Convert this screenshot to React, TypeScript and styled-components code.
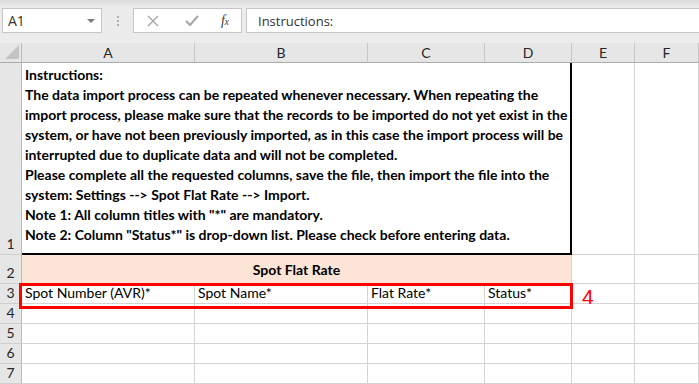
import { Fragment } from "react";
import styled, { createGlobalStyle } from "styled-components";

const GlobalStyle = createGlobalStyle`
  html, body {
    margin: 0;
    padding: 0;
    background: #ffffff;
  }
  * {
    box-sizing: border-box;
  }
`;

const GRID = "#d4d4d4";
const HEAD_BG = "#e6e6e6";

export const Page = styled.div`
  width: 699px;
  height: 384px;
  overflow: hidden;
  position: relative;
  background: #ffffff;
  font-family: "Lato", "Liberation Sans", sans-serif;
`;

export const Toolbar = styled.div`
  height: 43px;
  display: flex;
  align-items: flex-start;
  padding: 8px 0 0 2px;
  background: linear-gradient(#dcdcdc 0px, #ececec 7px, #ececec 100%);
`;

export const NameBox = styled.div`
  width: 100px;
  height: 25px;
  background: #ffffff;
  border: 1px solid #c6c6c6;
  display: flex;
  align-items: center;
  justify-content: space-between;
  padding: 0 6px 0 5px;
  font-family: "Open Sans", sans-serif;
  font-size: 14px;
  color: #333333;
`;

export const DropArrow = styled.span`
  width: 0;
  height: 0;
  border-left: 4px solid transparent;
  border-right: 4px solid transparent;
  border-top: 4px solid #7a7a7a;
`;

export const Dots = styled.div`
  width: 31px;
  height: 25px;
  display: flex;
  flex-direction: column;
  align-items: center;
  justify-content: center;
  gap: 2px;
  span {
    width: 2px;
    height: 2px;
    background: #b0b0b0;
  }
`;

export const ButtonBox = styled.div`
  width: 109px;
  height: 25px;
  background: #ffffff;
  border: 1px solid #c6c6c6;
  display: flex;
  align-items: center;
  padding-left: 13px;
`;

export const IconSlot = styled.div<{ $w: number }>`
  width: ${(p) => p.$w}px;
  display: flex;
  align-items: center;
`;

export const FxText = styled.span`
  font-family: "Liberation Serif", serif;
  font-style: italic;
  font-size: 14px;
  color: #444444;
  letter-spacing: -0.5px;
  sub {
    font-size: 10px;
    vertical-align: baseline;
  }
`;

export const FormulaInput = styled.div`
  flex: 1;
  height: 25px;
  margin-left: 4px;
  background: #ffffff;
  border: 1px solid #c6c6c6;
  border-right: none;
  display: flex;
  align-items: center;
  padding-left: 11px;
  font-family: "Open Sans", sans-serif;
  font-size: 13px;
  color: #333333;
`;

export const Sheet = styled.div`
  display: grid;
  grid-template-columns: 22px 173px 173px 117px 87px 63px 64px;
  grid-template-rows: 20px 192px 29px 20px 20px 20px 20px 20px;
  position: relative;
`;

export const Corner = styled.div`
  background: ${HEAD_BG};
  border-right: 1px solid #bcbcbc;
  border-bottom: 1px solid #ababab;
  position: relative;
  &::after {
    content: "";
    position: absolute;
    right: 2px;
    bottom: 3px;
    width: 0;
    height: 0;
    border-left: 14px solid transparent;
    border-bottom: 14px solid #c4c4c4;
  }
`;

export const ColHead = styled.div`
  background: ${HEAD_BG};
  border-right: 1px solid #c6c6c6;
  border-bottom: 1px solid #ababab;
  display: flex;
  align-items: center;
  justify-content: center;
  font-size: 14px;
  color: #262626;
`;

export const RowHead = styled.div`
  background: ${HEAD_BG};
  border-right: 1px solid #bcbcbc;
  border-bottom: 1px solid #cfcfcf;
  display: flex;
  align-items: flex-end;
  justify-content: center;
  padding-bottom: 1px;
  font-size: 14px;
  color: #262626;
  line-height: 18px;
`;

export const Cell = styled.div`
  border-right: 1px solid ${GRID};
  border-bottom: 1px solid ${GRID};
  display: flex;
  align-items: flex-end;
  padding: 0 0 1px 3px;
  font-size: 14px;
  line-height: 18px;
  color: #000000;
  white-space: nowrap;
`;

export const NoteCell = styled.div`
  grid-column: span 4;
  border-right: 2px solid #000000;
  border-bottom: 2px solid #000000;
  padding: 2px 0 0 3px;
  font-size: 14px;
  font-weight: 700;
  line-height: 20px;
  color: #000000;
  white-space: nowrap;
`;

export const TitleCell = styled.div`
  grid-column: span 4;
  background: #fce4d6;
  border-right: 1px solid ${GRID};
  display: flex;
  align-items: flex-end;
  justify-content: center;
  padding-bottom: 5px;
  font-size: 14px;
  font-weight: 700;
  line-height: 18px;
  color: #000000;
`;

export const Marker = styled.div`
  position: absolute;
  left: 19px;
  top: 240px;
  width: 554px;
  height: 26px;
  border: 3px solid #ff0000;
  pointer-events: none;
`;

export const MarkerLabel = styled.div`
  position: absolute;
  left: 582px;
  top: 242px;
  font-family: "Liberation Sans", sans-serif;
  font-size: 21px;
  color: #ff0000;
`;

const columns = ["A", "B", "C", "D", "E", "F"];

const noteLines = [
  "Instructions:",
  "The data import process can be repeated whenever necessary. When repeating the",
  "import process, please make sure that the records to be imported do not yet exist in the",
  "system, or have not been previously imported, as in this case the import process will be",
  "interrupted due to duplicate data and will not be completed.",
  "Please complete all the requested columns, save the file, then import the file into the",
  "system: Settings --> Spot Flat Rate --> Import.",
  'Note 1: All column titles with "*" are mandatory.',
  'Note 2: Column "Status*" is drop-down list. Please check before entering data.',
];

const headers = ["Spot Number (AVR)*", "Spot Name*", "Flat Rate*", "Status*"];

function CrossIcon() {
  return (
    <svg width="12" height="12" viewBox="0 0 12 12">
      <path d="M1 1 L11 11 M11 1 L1 11" stroke="#a6a6a6" strokeWidth="1.4" fill="none" />
    </svg>
  );
}

function CheckIcon() {
  return (
    <svg width="14" height="12" viewBox="0 0 14 12">
      <path d="M1 6 L5 10 L13 1" stroke="#a6a6a6" strokeWidth="2" fill="none" />
    </svg>
  );
}

export default function App() {
  return (
    <>
      <GlobalStyle />
      <Page>
        <Toolbar>
          <NameBox>
            A1
            <DropArrow />
          </NameBox>
          <Dots>
            <span />
            <span />
            <span />
          </Dots>
          <ButtonBox>
            <IconSlot $w={38}>
              <CrossIcon />
            </IconSlot>
            <IconSlot $w={36}>
              <CheckIcon />
            </IconSlot>
            <IconSlot $w={18}>
              <FxText>
                f<sub>x</sub>
              </FxText>
            </IconSlot>
          </ButtonBox>
          <FormulaInput>Instructions:</FormulaInput>
        </Toolbar>

        <Sheet>
          <Corner />
          {columns.map((c) => (
            <ColHead key={c}>{c}</ColHead>
          ))}

          <RowHead>1</RowHead>
          <NoteCell>
            {noteLines.map((line) => (
              <div key={line}>{line}</div>
            ))}
          </NoteCell>
          <Cell />
          <Cell />

          <RowHead>2</RowHead>
          <TitleCell>Spot Flat Rate</TitleCell>
          <Cell />
          <Cell />

          <RowHead>3</RowHead>
          {headers.map((h) => (
            <Cell key={h}>{h}</Cell>
          ))}
          <Cell />
          <Cell />

          {[4, 5, 6, 7].map((r) => (
            <Fragment key={r}>
              <RowHead>{r}</RowHead>
              {columns.map((c) => (
                <Cell key={`${c}${r}`} />
              ))}
            </Fragment>
          ))}

          <Marker />
          <MarkerLabel>4</MarkerLabel>
        </Sheet>
      </Page>
    </>
  );
}
